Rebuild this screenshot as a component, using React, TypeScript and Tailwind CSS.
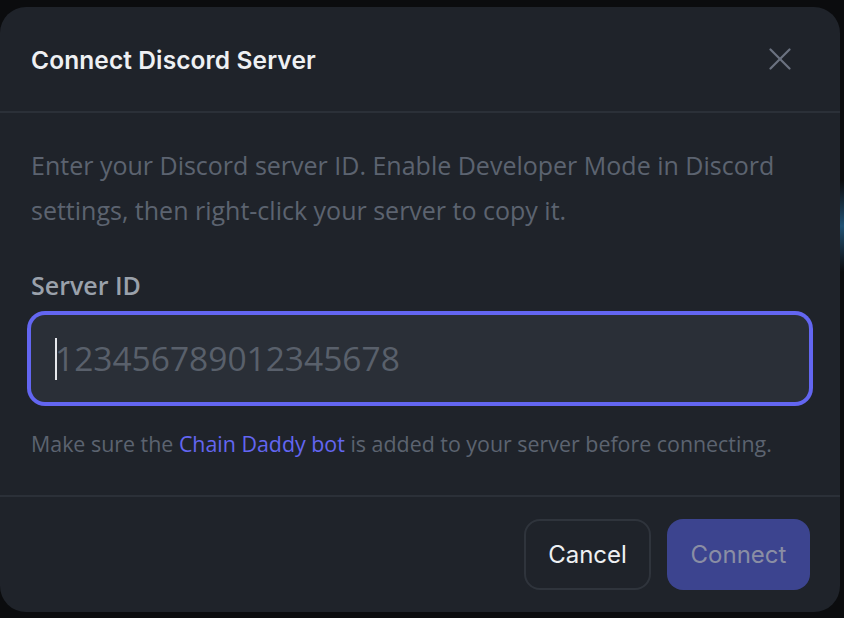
import React from "react";

const inter = { fontFamily: "Inter, 'Noto Sans', sans-serif" };
const open = { fontFamily: "'Open Sans', Inter, sans-serif" };

function CloseIcon() {
  return (
    <svg width="22" height="22" viewBox="0 0 22 22" fill="none" stroke="#6b7280" strokeWidth="2.2" strokeLinecap="round">
      <path d="M1.5 1.5 L20.5 20.5" />
      <path d="M20.5 1.5 L1.5 20.5" />
    </svg>
  );
}

export default function App() {
  return (
    <div className="relative h-[618px] w-[844px] overflow-hidden bg-[#0b0c0e]" style={inter}>
      {/* glow of the page behind the overlay */}
      <div className="absolute right-0 top-[180px] h-[92px] w-[4px] bg-gradient-to-b from-[#0b0c0e] via-[#1f5275] to-[#0b0c0e]" />

      <div className="pt-[7px]">
        <div className="flex h-[605px] w-[840px] flex-col rounded-[26px] bg-[#1f232a]">
          {/* header */}
          <div className="flex h-[106px] items-center justify-between border-b-2 border-[#2b3038] pl-[31px] pr-[49px]">
            <h2 className="pt-[3px] text-[24.5px] font-semibold tracking-[0.1px] text-[#eef0f3]">Connect Discord Server</h2>
            <button className="flex h-[22px] w-[22px] items-center justify-center">
              <CloseIcon />
            </button>
          </div>

          {/* body */}
          <div className="flex flex-col px-[31px] pt-[30px]" style={open}>
            <p className="text-[25px] leading-[45px] text-[#5c6370]">
              Enter your Discord server ID. Enable Developer Mode in Discord settings, then right-click your server to copy it.
            </p>

            <label className="mt-[37px] text-[25px] font-semibold leading-[30px] text-[#9aa1ab]">Server ID</label>

            <div className="relative mt-[15px] flex h-[87px] items-center rounded-[14px] bg-[#2a2f37] pl-[24px] ring-[4px] ring-[#6366f1]">
              <div className="absolute left-[24px] top-[23px] h-[42px] w-[2px] bg-[#e5e7eb]" />
              <input
                className="w-full bg-transparent text-[33.5px] text-[#e5e7eb] outline-none placeholder:text-[#59606b]"
                placeholder="123456789012345678"
                style={open}
              />
            </div>

            <p className="mt-[27px] text-[21.4px] leading-[30px] text-[#5c6370]">
              Make sure the <span className="text-[#6366f1]">Chain Daddy bot</span> is added to your server before connecting.
            </p>
          </div>

          {/* footer */}
          <div className="mt-auto flex items-center justify-end gap-[16px] border-t-2 border-[#2b3038] pb-[22px] pr-[30px] pt-[22px]">
            <button className="h-[71px] w-[127px] rounded-[16px] border-2 border-[#2f343c] text-[24px] text-[#eef0f3]">
              Cancel
            </button>
            <button className="h-[71px] w-[143px] rounded-[16px] bg-[#3c448f] text-[24px] text-[#8a8ea4]">
              Connect
            </button>
          </div>
        </div>
      </div>
    </div>
  );
}
